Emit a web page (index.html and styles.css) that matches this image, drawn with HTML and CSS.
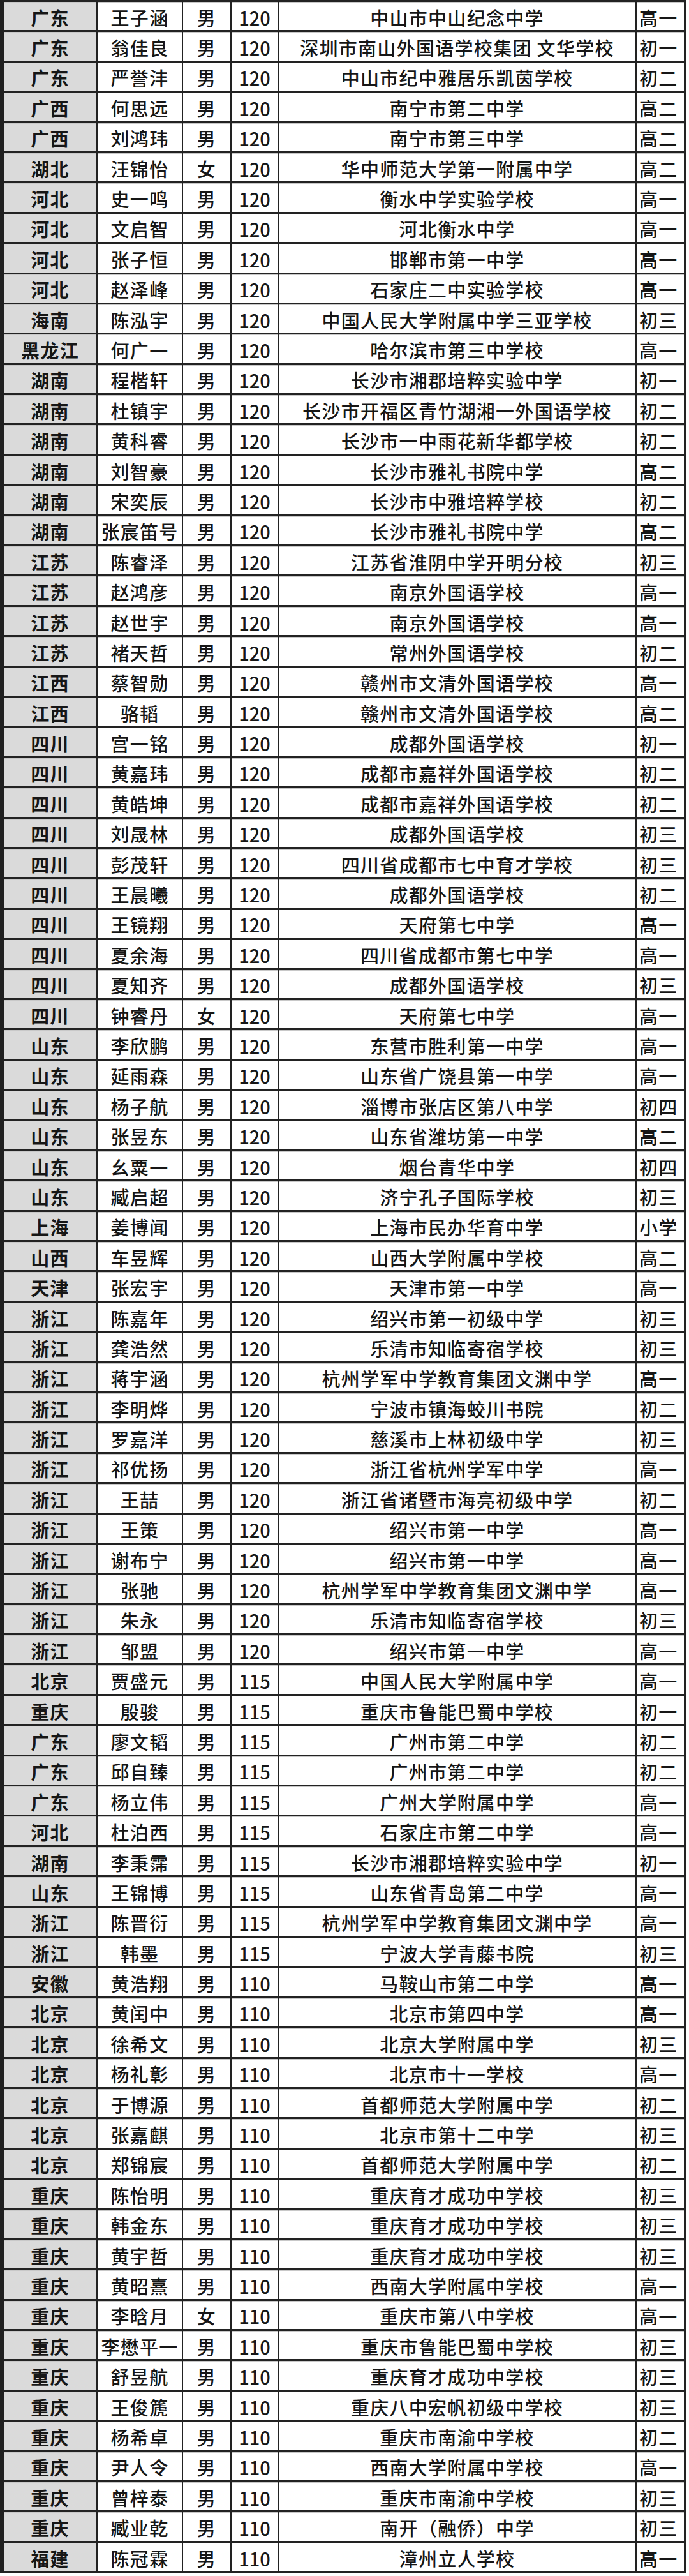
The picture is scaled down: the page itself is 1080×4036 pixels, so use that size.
FILE: index.html
```html
<!DOCTYPE html>
<html lang="zh-CN">
<head>
<meta charset="utf-8">
<title>成绩名单</title>
<link rel="stylesheet" href="styles.css">
</head>
<body>
<div class="sheet" id="sheet"></div>
<script>
var data = `广东|王子涵|男|120|中山市中山纪念中学|高一
广东|翁佳良|男|120|深圳市南山外国语学校集团 文华学校|初一
广东|严誉沣|男|120|中山市纪中雅居乐凯茵学校|初二
广西|何思远|男|120|南宁市第二中学|高二
广西|刘鸿玮|男|120|南宁市第三中学|高二
湖北|汪锦怡|女|120|华中师范大学第一附属中学|高二
河北|史一鸣|男|120|衡水中学实验学校|高一
河北|文启智|男|120|河北衡水中学|高一
河北|张子恒|男|120|邯郸市第一中学|高一
河北|赵泽峰|男|120|石家庄二中实验学校|高一
海南|陈泓宇|男|120|中国人民大学附属中学三亚学校|初三
黑龙江|何广一|男|120|哈尔滨市第三中学校|高一
湖南|程楷轩|男|120|长沙市湘郡培粹实验中学|初一
湖南|杜镇宇|男|120|长沙市开福区青竹湖湘一外国语学校|初二
湖南|黄科睿|男|120|长沙市一中雨花新华都学校|初二
湖南|刘智豪|男|120|长沙市雅礼书院中学|高二
湖南|宋奕辰|男|120|长沙市中雅培粹学校|初二
湖南|张宸笛号|男|120|长沙市雅礼书院中学|高二
江苏|陈睿泽|男|120|江苏省淮阴中学开明分校|初三
江苏|赵鸿彦|男|120|南京外国语学校|高一
江苏|赵世宇|男|120|南京外国语学校|高一
江苏|褚天哲|男|120|常州外国语学校|初二
江西|蔡智勋|男|120|赣州市文清外国语学校|高一
江西|骆韬|男|120|赣州市文清外国语学校|高二
四川|宫一铭|男|120|成都外国语学校|初一
四川|黄嘉玮|男|120|成都市嘉祥外国语学校|初二
四川|黄皓坤|男|120|成都市嘉祥外国语学校|初二
四川|刘晟林|男|120|成都外国语学校|初三
四川|彭茂轩|男|120|四川省成都市七中育才学校|初三
四川|王晨曦|男|120|成都外国语学校|初二
四川|王镜翔|男|120|天府第七中学|高一
四川|夏余海|男|120|四川省成都市第七中学|高一
四川|夏知齐|男|120|成都外国语学校|初三
四川|钟睿丹|女|120|天府第七中学|高一
山东|李欣鹏|男|120|东营市胜利第一中学|高一
山东|延雨森|男|120|山东省广饶县第一中学|高一
山东|杨子航|男|120|淄博市张店区第八中学|初四
山东|张昱东|男|120|山东省潍坊第一中学|高二
山东|幺粟一|男|120|烟台青华中学|初四
山东|臧启超|男|120|济宁孔子国际学校|初三
上海|姜博闻|男|120|上海市民办华育中学|小学
山西|车昱辉|男|120|山西大学附属中学校|高二
天津|张宏宇|男|120|天津市第一中学|高一
浙江|陈嘉年|男|120|绍兴市第一初级中学|初三
浙江|龚浩然|男|120|乐清市知临寄宿学校|初三
浙江|蒋宇涵|男|120|杭州学军中学教育集团文渊中学|高一
浙江|李明烨|男|120|宁波市镇海蛟川书院|初二
浙江|罗嘉洋|男|120|慈溪市上林初级中学|初三
浙江|祁优扬|男|120|浙江省杭州学军中学|高一
浙江|王喆|男|120|浙江省诸暨市海亮初级中学|初二
浙江|王策|男|120|绍兴市第一中学|高一
浙江|谢布宁|男|120|绍兴市第一中学|高一
浙江|张驰|男|120|杭州学军中学教育集团文渊中学|高一
浙江|朱永|男|120|乐清市知临寄宿学校|初三
浙江|邹盟|男|120|绍兴市第一中学|高一
北京|贾盛元|男|115|中国人民大学附属中学|高一
重庆|殷骏|男|115|重庆市鲁能巴蜀中学校|初一
广东|廖文韬|男|115|广州市第二中学|初二
广东|邱自臻|男|115|广州市第二中学|初二
广东|杨立伟|男|115|广州大学附属中学|高一
河北|杜泊西|男|115|石家庄市第二中学|高一
湖南|李秉霈|男|115|长沙市湘郡培粹实验中学|初一
山东|王锦博|男|115|山东省青岛第二中学|高一
浙江|陈晋衍|男|115|杭州学军中学教育集团文渊中学|高一
浙江|韩墨|男|115|宁波大学青藤书院|初三
安徽|黄浩翔|男|110|马鞍山市第二中学|高一
北京|黄闰中|男|110|北京市第四中学|高一
北京|徐希文|男|110|北京大学附属中学|初三
北京|杨礼彰|男|110|北京市十一学校|高一
北京|于博源|男|110|首都师范大学附属中学|初二
北京|张嘉麒|男|110|北京市第十二中学|初三
北京|郑锦宸|男|110|首都师范大学附属中学|初二
重庆|陈怡明|男|110|重庆育才成功中学校|初三
重庆|韩金东|男|110|重庆育才成功中学校|初三
重庆|黄宇哲|男|110|重庆育才成功中学校|初三
重庆|黄昭熹|男|110|西南大学附属中学校|高一
重庆|李晗月|女|110|重庆市第八中学校|高一
重庆|李懋平一|男|110|重庆市鲁能巴蜀中学校|初三
重庆|舒昱航|男|110|重庆育才成功中学校|初三
重庆|王俊篪|男|110|重庆八中宏帆初级中学校|初三
重庆|杨希卓|男|110|重庆市南渝中学校|初二
重庆|尹人令|男|110|西南大学附属中学校|高一
重庆|曾梓泰|男|110|重庆市南渝中学校|初三
重庆|臧业乾|男|110|南开（融侨）中学|初三
福建|陈冠霖|男|110|漳州立人学校|高一`;
var cls = ['prov','name','sex','score','school','grade'];
var sheet = document.getElementById('sheet');
data.split('\n').forEach(function (line) {
  var row = document.createElement('div');
  row.className = 'row';
  line.split('|').forEach(function (v, i) {
    var c = document.createElement('div');
    c.className = 'cell ' + cls[i];
    c.textContent = v;
    row.appendChild(c);
  });
  sheet.appendChild(row);
});
</script>
</body>
</html>
```
FILE: styles.css
```css
html, body {
  margin: 0;
  padding: 0;
  background: #ffffff;
}
body {
  font-family: "Noto Sans CJK SC", "Noto Sans", sans-serif;
  color: #161616;
}
.sheet {
  width: 1075px;
  border-top: 3px solid #222;
  border-left: 7px solid #1f1f1f;
  border-right: 3px solid #222;
  box-sizing: border-box;
  display: flex;
  flex-direction: column;
}
.row {
  height: 47.4px;
  box-sizing: border-box;
  border-bottom: 3px solid #222;
  display: grid;
  grid-template-columns: 146px 134px 76px 74px 561px 1fr;
}
.cell {
  display: flex;
  align-items: center;
  justify-content: center;
  font-size: 29px;
  font-weight: 500;
  letter-spacing: 1.3px;
  white-space: nowrap;
  overflow: hidden;
  border-right: 2px solid #222;
  box-shadow: inset 0 1px 0 #c8c8c8;
  padding-top: 3px;
  box-sizing: border-box;
}
.cell.grade {
  border-right: none;
  justify-content: flex-start;
  padding-left: 4px;
}
.cell.prov {
  background: #dadada;
  font-weight: 700;
  border-right-width: 3px;
}
.cell.score {
  letter-spacing: 0;
}
```
